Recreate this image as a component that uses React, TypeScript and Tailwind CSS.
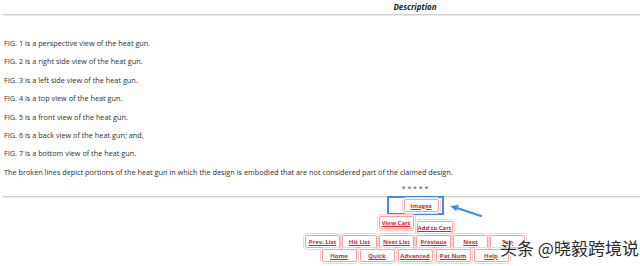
import React from 'react';

const figures = [
    'FIG. 1 is a perspective view of the heat gun.',
    'FIG. 2 is a right side view of the heat gun.',
    'FIG. 3 is a left side view of the heat gun.',
    'FIG. 4 is a top view of the heat gun.',
    'FIG. 5 is a front view of the heat gun.',
    'FIG. 6 is a back view of the heat gun; and,',
    'FIG. 7 is a bottom view of the heat gun.',
    'The broken lines depict portions of the heat gun in which the design is embodied that are not considered part of the claimed design.',
];

const navTop = ['Prev. List', 'Hit List', 'Next List', 'Previous', 'Next', 'Top'];
const navBottom = ['Home', 'Quick', 'Advanced', 'Pat Num', 'Help'];

function NavButton({ label, className = '' }: { label: string; className?: string }) {
    return (
        <span
            className={`inline-flex h-[13px] w-[35px] items-center justify-center rounded-[2px] border border-[#f2a3a3] bg-white text-[6px] leading-none font-bold text-[#e02424] underline outline outline-1 outline-offset-[1px] outline-[#f8d0d0] ${className}`}
        >
            {label}
        </span>
    );
}

export default function App() {
    return (
        <div className="relative h-[266px] w-[640px] overflow-hidden bg-white" style={{ fontFamily: '"Open Sans", "Noto Sans", sans-serif' }}>
            <div className="w-[830px]">
                {/* Header */}
                <div className="pt-[2px] text-center text-[8px] leading-[10px] font-bold italic text-[#222]">Description</div>
                <div className="mt-[2px] ml-[3px] h-[2px] border-t border-[#cfcfcf] bg-[#e8e8e8]" />

                {/* Figures */}
                <div className="mt-[22px] pl-[4px] text-[7.3px] leading-[10px] text-[#2e2e2e]">
                    {figures.map((line, idx) => (
                        <p key={idx} className="mb-[8.4px]">
                            {line}
                        </p>
                    ))}
                </div>

                <div className="mt-[5px] text-center text-[7px] leading-[8px] text-[#444]">* * * * *</div>
                <div className="mt-[3px] ml-[3px] h-[2px] border-t border-[#cfcfcf] bg-[#ececec]" />

                {/* Navigation */}
                <div className="flex flex-col items-center">
                    <div className="-mt-[2px] flex h-[19px] w-[57px] items-center border-2 border-[#3b8ee6] pl-[15px]">
                        <NavButton label="Images" className="h-[11px] w-[31px]" />
                    </div>
                    <div className="ml-[1px] flex items-start gap-[3px]">
                        <NavButton label="View Cart" className="mt-[1px] h-[11px] w-[34px]" />
                        <NavButton label="Add to Cart" className="mt-[6px] h-[11px] w-[36px]" />
                    </div>
                    <div className="mt-[1px] flex gap-[2px]">
                        {navTop.map((label) => (
                            <NavButton key={label} label={label} />
                        ))}
                    </div>
                    <div className="mt-[1px] flex gap-[3px]">
                        {navBottom.map((label) => (
                            <NavButton key={label} label={label} />
                        ))}
                    </div>
                </div>
            </div>

            {/* Annotation arrow */}
            <svg className="absolute left-[446px] top-[202px]" width="40" height="16" viewBox="0 0 40 16">
                <path d="M35 14 L8 5" stroke="#3b8ee6" strokeWidth="2" strokeLinecap="round" />
                <path d="M4 4 L13 3 L10 9 Z" fill="#3b8ee6" />
            </svg>

            {/* Watermark */}
            <div
                className="absolute left-[500px] top-[237px] text-[17px] leading-[22px] text-[#2a2a2a] [text-shadow:0_0_2px_#fff,0_0_2px_#fff]"
                style={{ fontFamily: '"Noto Sans CJK SC", sans-serif' }}
            >
                头条 @晓毅跨境说
            </div>
        </div>
    );
}
